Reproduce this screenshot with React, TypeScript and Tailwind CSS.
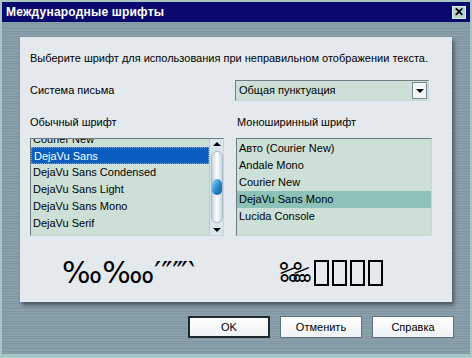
import React from 'react'

const leftFonts = ['DejaVu Sans', 'DejaVu Sans Condensed', 'DejaVu Sans Light', 'DejaVu Sans Mono', 'DejaVu Serif']
const monoFonts = ['Авто (Courier New)', 'Andale Mono', 'Courier New', 'DejaVu Sans Mono', 'Lucida Console']

function Scrollbar() {
  return (
    <div className="flex flex-col items-center w-[14px] h-full bg-[#dbe6ec] border-l border-[#b8c8d0]">
      <div className="h-[10px] flex items-center justify-center">
        <div className="w-0 h-0 border-l-[4px] border-r-[4px] border-b-[4px] border-l-transparent border-r-transparent border-b-black" />
      </div>
      <div className="relative mt-[2px] w-[12px] h-[72px] rounded-full bg-gradient-to-r from-[#c9d6de] via-white to-[#c9d6de] border border-[#a9bac4] flex items-center justify-center">
        <div className="w-[11px] h-[16px] rounded-full bg-gradient-to-br from-[#9fd7f5] via-[#2a8fd0] to-[#0c5a99]" />
      </div>
      <div className="flex-1" />
      <div className="h-[10px] flex items-center justify-center">
        <div className="w-0 h-0 border-l-[4px] border-r-[4px] border-t-[4px] border-l-transparent border-r-transparent border-t-black" />
      </div>
    </div>
  )
}

function Button({ label, isDefault }: { label: string; isDefault?: boolean }) {
  return (
    <button
      className={
        'w-[82px] h-[22px] text-[11px] text-black bg-gradient-to-b from-white to-[#eef2f4] ' +
        (isDefault ? 'border-2 border-[#1e2a30]' : 'border border-[#5d7480]')
      }
    >
      {label}
    </button>
  )
}

export default function App() {
  return (
    <div
      className="w-[472px] h-[358px] flex flex-col bg-[#a9c6c4] p-[2px] overflow-hidden"
      style={{ fontFamily: '"Liberation Sans", Arial, sans-serif' }}
    >
      <div className="h-[20px] flex items-center justify-between bg-[#0a0a6e] pl-[4px] pr-[4px]">
        <span className="text-white text-[12px] font-bold tracking-[0.2px]">Международные шрифты</span>
        <div className="w-[14px] h-[13px] bg-[#b7d3cb] border border-[#dfeee9] flex items-center justify-center text-black text-[12px] font-bold leading-none">
          ✕
        </div>
      </div>

      <div className="flex-1 flex flex-col bg-[repeating-linear-gradient(180deg,#8ea3ae_0px,#7d94a0_2px,#93a8b2_3px,#7a919d_5px)] border-b-[2px] border-[#9fc9c2]">
        <div className="mt-[15px] ml-[18px] w-[432px] h-[265px] bg-[#e4e9ee] shadow-[2px_3px_4px_rgba(20,30,40,0.55)] flex flex-col px-[10px] pt-[14px] text-[11px] text-black">
          <p className="leading-[14px]">Выберите шрифт для использования при неправильном отображении текста.</p>

          <div className="mt-[15px] flex items-center">
            <span className="w-[205px]">Система письма</span>
            <div className="w-[194px] h-[21px] bg-[#cde0d8] border border-t-[#6b7c84] border-l-[#6b7c84] border-r-[#c9d6dc] border-b-[#c9d6dc] flex items-center justify-between pl-[3px] pr-[1px]">
              <span>Общая пунктуация</span>
              <div className="w-[15px] h-[17px] bg-[#f2f5f6] border border-[#7b8a92] flex items-center justify-center">
                <div className="w-0 h-0 border-l-[4px] border-r-[4px] border-t-[4px] border-l-transparent border-r-transparent border-t-black" />
              </div>
            </div>
          </div>

          <div className="mt-[13px] flex">
            <span className="w-[207px]">Обычный шрифт</span>
            <span>Моноширинный шрифт</span>
          </div>

          <div className="mt-[7px] flex">
            <div className="w-[194px] h-[98px] flex bg-[#cde0d8] border border-t-[#6b7c84] border-l-[#6b7c84] border-r-[#c9d6dc] border-b-[#c9d6dc] overflow-hidden">
              <div className="flex-1 flex flex-col">
                <div className="h-[8px] leading-[8px] overflow-hidden pl-[2px]">
                  <div className="-mt-[7px] leading-[15px]">Courier New</div>
                </div>
                {leftFonts.map((f, i) => (
                  <div
                    key={f}
                    className={
                      'h-[17px] leading-[17px] pl-[2px] ' +
                      (i === 0 ? 'bg-[#0a5cbf] text-white border border-dotted border-[#7aa6e0] leading-[15px]' : '')
                    }
                  >
                    {f}
                  </div>
                ))}
              </div>
              <Scrollbar />
            </div>

            <div className="ml-[12px] w-[196px] h-[98px] flex flex-col pt-[1px] bg-[#cde0d8] border border-t-[#6b7c84] border-l-[#6b7c84] border-r-[#c9d6dc] border-b-[#c9d6dc]">
              {monoFonts.map((f, i) => (
                <div key={f} className={'h-[17px] leading-[17px] pl-[2px] ' + (i === 3 ? 'bg-[#8cc2b7]' : '')}>
                  {f}
                </div>
              ))}
            </div>
          </div>

          <div className="mt-[20px] flex items-center h-[34px]">
            <span
              className="ml-[32px] w-[218px] text-[30px] leading-none"
              style={{ fontFamily: '"DejaVu Sans", sans-serif' }}
            >
              ‰‱′″‴‵
            </span>
            <span className="flex items-center">
              <span
                className="text-[28px] leading-none tracking-[-3px]"
                style={{ fontFamily: '"DejaVu Sans Mono", monospace' }}
              >
                ‰‱
              </span>
              <span className="ml-[6px] flex gap-[3px]">
                <span className="w-[15px] h-[26px] border-2 border-black" />
                <span className="w-[15px] h-[26px] border-2 border-black" />
                <span className="w-[15px] h-[26px] border-2 border-black" />
                <span className="w-[15px] h-[26px] border-2 border-black" />
              </span>
            </span>
          </div>
        </div>

        <div className="mt-[14px] mr-[16px] flex justify-end gap-[10px]">
          <Button label="OK" isDefault />
          <Button label="Отменить" />
          <Button label="Справка" />
        </div>
      </div>
    </div>
  )
}
